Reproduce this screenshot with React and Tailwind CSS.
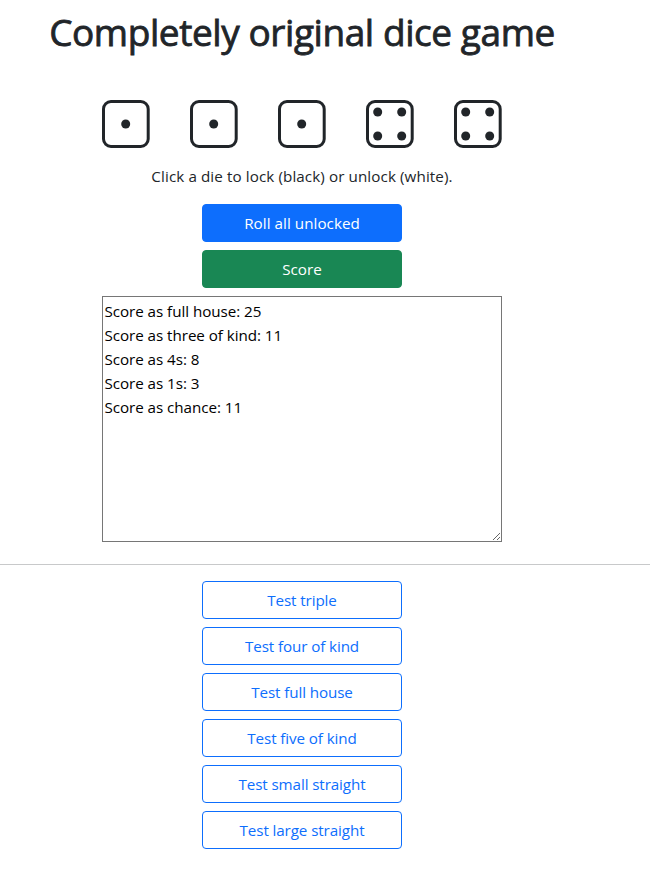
const PIPS = {
  1: [[8, 8]],
  4: [[4, 4], [12, 4], [4, 12], [12, 12]],
};

function Die({ value }) {
  return (
    <svg viewBox="0 0 16 16" className="size-12" fill="none">
      <rect x="0.5" y="0.5" width="14.9" height="15" rx="2.5" stroke="currentColor" />
      {PIPS[value].map(([cx, cy]) => (
        <circle key={`${cx}-${cy}`} cx={cx - 0.1} cy={cy} r="1.5" fill="currentColor" />
      ))}
    </svg>
  );
}

const BUTTON = "h-[38px] w-[200px] rounded border pb-px text-[15.2px] leading-6";

const TESTS = [
  "Test triple",
  "Test four of kind",
  "Test full house",
  "Test five of kind",
  "Test small straight",
  "Test large straight",
];

const SCORES = [
  "Score as full house: 25",
  "Score as three of kind: 11",
  "Score as 4s: 8",
  "Score as 1s: 3",
  "Score as chance: 11",
].join("\n");

export default function App() {
  return (
    <div className="h-[871px] overflow-hidden bg-white font-['Open_Sans','Noto_Sans',sans-serif] text-[15.2px] leading-6 text-[#212529]">
      <main className="flex w-[604px] flex-col items-center">
        <h1 className="mt-2 h-12 whitespace-nowrap text-[37px] font-normal leading-12 tracking-[-0.43px] [-webkit-text-stroke:0.8px_#212529]">
          Completely original dice game
        </h1>
        <div className="mt-11 flex gap-10">
          {[1, 1, 1, 4, 4].map((value, i) => (
            <Die key={i} value={value} />
          ))}
        </div>
        <p className="mt-4 whitespace-nowrap tracking-[0.1px]">Click a die to lock (black) or unlock (white).</p>
        <div className="mt-4 flex flex-col gap-2">
          <button className={`${BUTTON} border-[#0d6efd] bg-[#0d6efd] tracking-[0.05px] text-white`}>Roll all unlocked</button>
          <button className={`${BUTTON} border-[#198754] bg-[#198754] text-white`}>Score</button>
        </div>
        <textarea
          className="mt-2 block h-[246px] w-[400px] border border-[#767676] py-0.5 pr-0.5 pl-[1.5px] text-[15.2px] leading-6 tracking-[-0.05px] text-black"
          defaultValue={SCORES}
        />
      </main>
      <hr className="mt-[22px] w-[650px] border-[#c8c9ca]" />
      <section className="mt-4 flex w-[604px] flex-col items-center gap-2">
        {TESTS.map((label) => (
          <button key={label} className={`${BUTTON} border-[#0d6efd] tracking-[-0.1px] text-[#0d6efd]`}>
            {label}
          </button>
        ))}
      </section>
    </div>
  );
}
